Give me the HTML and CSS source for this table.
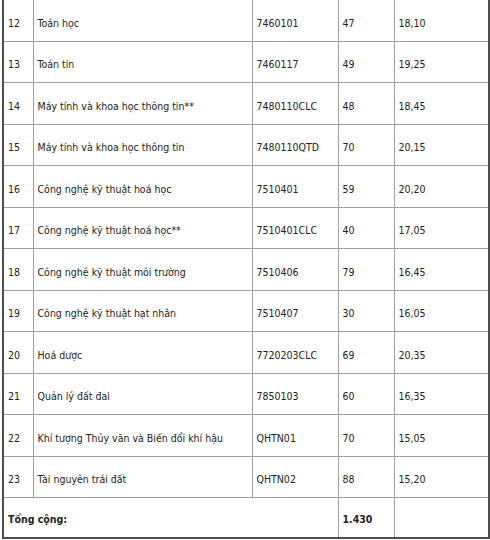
FILE: index.html
```html
<!DOCTYPE html>
<html lang="vi">
<head>
<meta charset="utf-8">
<link rel="stylesheet" href="styles.css">
</head>
<body>
<div class="wrap">
<table class="grid">
<colgroup>
<col class="c1"><col class="c2"><col class="c3"><col class="c4"><col class="c5">
</colgroup>
<tbody>
<tr><td>12</td><td>Toán học</td><td>7460101</td><td>47</td><td>18,10</td></tr>
<tr><td>13</td><td>Toán tin</td><td>7460117</td><td>49</td><td>19,25</td></tr>
<tr><td>14</td><td>Máy tính và khoa học thông tin**</td><td>7480110CLC</td><td>48</td><td>18,45</td></tr>
<tr><td>15</td><td>Máy tính và khoa học thông tin</td><td>7480110QTD</td><td>70</td><td>20,15</td></tr>
<tr><td>16</td><td>Công nghệ kỹ thuật hoá học</td><td>7510401</td><td>59</td><td>20,20</td></tr>
<tr><td>17</td><td>Công nghệ kỹ thuật hoá học**</td><td>7510401CLC</td><td>40</td><td>17,05</td></tr>
<tr><td>18</td><td>Công nghệ kỹ thuật môi trường</td><td>7510406</td><td>79</td><td>16,45</td></tr>
<tr><td>19</td><td>Công nghệ kỹ thuật hạt nhân</td><td>7510407</td><td>30</td><td>16,05</td></tr>
<tr><td>20</td><td>Hoá dược</td><td>7720203CLC</td><td>69</td><td>20,35</td></tr>
<tr><td>21</td><td>Quản lý đất đai</td><td>7850103</td><td>60</td><td>16,35</td></tr>
<tr><td>22</td><td>Khí tượng Thủy văn và Biến đổi khí hậu</td><td>QHTN01</td><td>70</td><td>15,05</td></tr>
<tr><td>23</td><td>Tài nguyên trái đất</td><td>QHTN02</td><td>88</td><td>15,20</td></tr>
<tr class="total"><td colspan="3">Tổng cộng:</td><td>1.430</td><td></td></tr>
</tbody>
</table>
</div>
</body>
</html>
```
FILE: styles.css
```css
html, body {
  margin: 0;
  padding: 0;
  background: #ffffff;
}
.wrap {
  padding: 0 0 0 2px;
  width: 488px;
  margin-top: -1px;
}
.grid {
  border-collapse: collapse;
  table-layout: fixed;
  width: 488px;
  font-family: "DejaVu Sans Condensed", "DejaVu Sans", Verdana, sans-serif;
  font-stretch: condensed;
  font-size: 10.5px;
  color: #222222;
  border-left: 2px solid #4d4d4d;
  border-right: 2px solid #4d4d4d;
  border-bottom: 2px solid #4d4d4d;
}
.c1 { width: 30px; }
.c2 { width: 219px; }
.c3 { width: 86px; }
.c4 { width: 56px; }
.c5 { width: 95px; }
.grid td {
  border: 1px solid #a0a0a0;
  height: 41.5px;
  box-sizing: border-box;
  padding: 5px 0 0 4px;
  vertical-align: middle;
  white-space: nowrap;
}
.total td {
  font-weight: bold;
  font-size: 10.5px;
  height: 40px;
  padding-top: 3px;
}
```
